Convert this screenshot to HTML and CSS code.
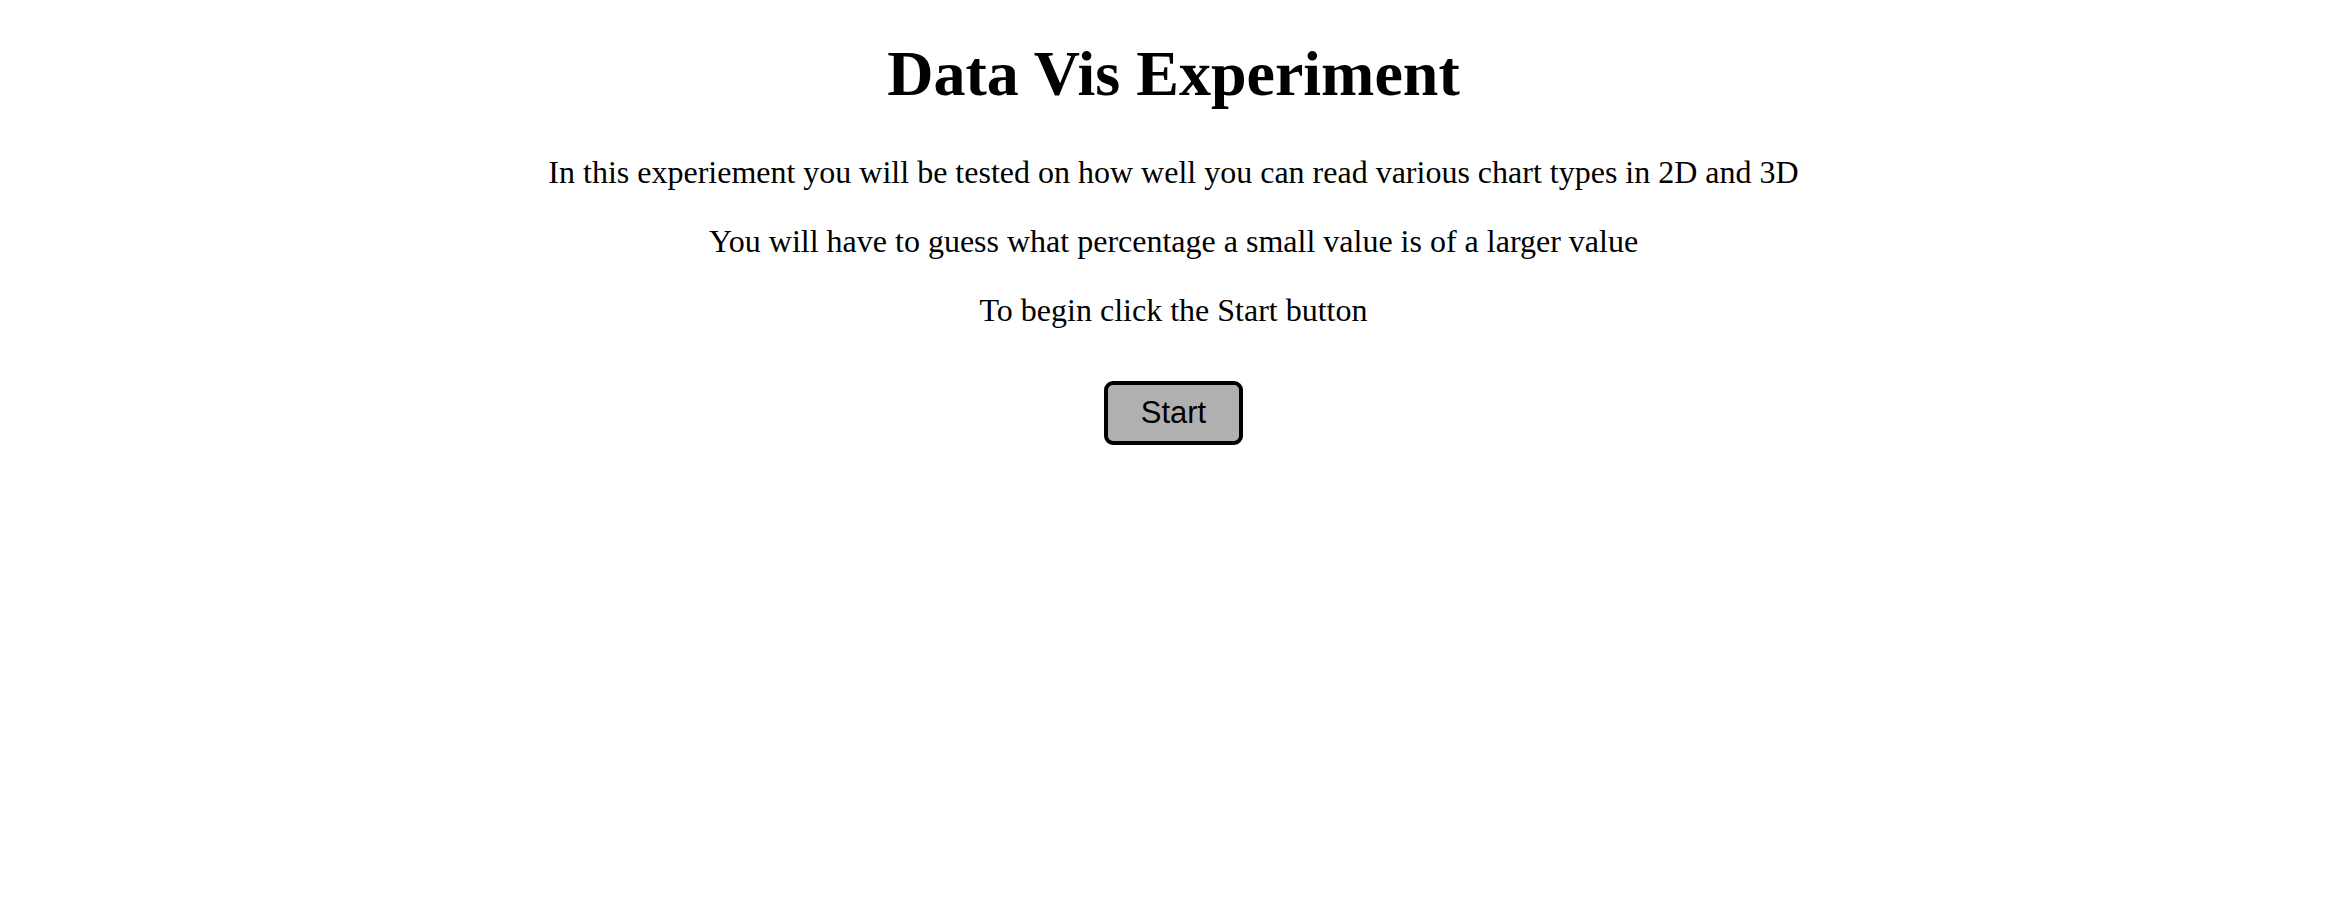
FILE: index.html
```html
<!DOCTYPE html>
<html>
<head>
<meta charset="utf-8">
<title>Data Vis Experiment</title>
<link rel="stylesheet" href="styles.css">
</head>
<body>
<main class="intro">
  <h1 class="title">Data Vis Experiment</h1>
  <p class="text">In this experiement you will be tested on how well you can read various chart types in 2D and 3D</p>
  <p class="text">You will have to guess what percentage a small value is of a larger value</p>
  <p class="text">To begin click the Start button</p>
  <button class="start" type="button">Start</button>
</main>
</body>
</html>
```

FILE: styles.css
```css
html, body {
  margin: 0;
  padding: 0;
  background: #ffffff;
}

body {
  font-family: "Liberation Serif", "Times New Roman", serif;
  color: #000000;
}

.intro {
  display: flex;
  flex-direction: column;
  align-items: center;
  text-align: center;
  padding: 37px 0 0 21px;
}

.title {
  font-size: 64px;
  font-weight: bold;
  margin: 0 0 43px 0;
  line-height: 74px;
}

.text {
  font-size: 32px;
  margin: 0 0 32px 0;
  line-height: 37px;
}

.start {
  font-family: "Liberation Sans", Arial, sans-serif;
  font-size: 31px;
  color: #000000;
  background: #b0b0b0;
  border: 4px solid #000000;
  border-radius: 9px;
  padding: 10px 33px;
  line-height: 36px;
  margin-top: 20px;
}
```
